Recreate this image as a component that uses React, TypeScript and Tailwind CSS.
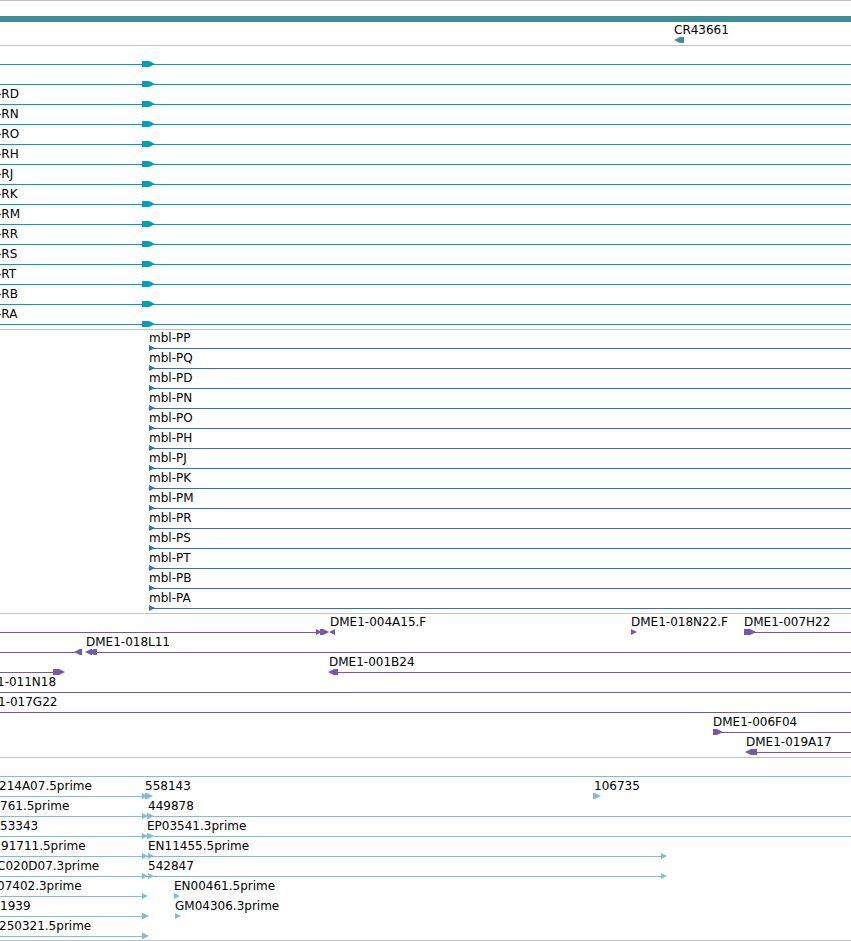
import React from 'react';

type Dir = 'left' | 'right';

interface Arrow {
  from: number;
  to: number;
  dir: Dir;
}

interface Row {
  labels?: [number, string][];
  // [start, end], no end means the feature runs past the right edge
  lines?: [number, number?][];
  arrows?: Arrow[];
}

interface TrackProps {
  name: string;
  rows: Row[];
  color: string;
  last?: boolean;
}

const right = (from: number, to: number): Arrow => ({ from, to, dir: 'right' });
const left = (from: number, to: number): Arrow => ({ from, to, dir: 'left' });

const geneRows: Row[] = [{ labels: [[674, 'CR43661']], arrows: [left(674, 684)] }];

const transcriptNames = [
  '', '', '-RD', '-RN', '-RO', '-RH', '-RJ', '-RK', '-RM', '-RR', '-RS', '-RT', '-RB', '-RA',
];

const transcriptRows: Row[] = transcriptNames.map((name) => ({
  labels: name ? [[-3, name]] : [],
  lines: [[0]],
  arrows: [right(142, 155)],
}));

const proteinNames = ['PP', 'PQ', 'PD', 'PN', 'PO', 'PH', 'PJ', 'PK', 'PM', 'PR', 'PS', 'PT', 'PB', 'PA'];

const proteinRows: Row[] = proteinNames.map((name) => ({
  labels: [[149, `mbl-${name}`]],
  lines: [[149]],
  arrows: [right(149, 155)],
}));

const bacRows: Row[] = [
  {
    labels: [[330, 'DME1-004A15.F'], [631, 'DME1-018N22.F'], [744, 'DME1-007H22']],
    lines: [[0, 318], [744]],
    arrows: [right(316, 322), right(320, 329), left(329, 335), right(631, 637), right(744, 756)],
  },
  {
    labels: [[86, 'DME1-018L11']],
    lines: [[0, 80], [90]],
    arrows: [left(74, 82), left(85, 92), left(88, 97)],
  },
  {
    labels: [[329, 'DME1-001B24']],
    lines: [[0, 60], [332]],
    arrows: [right(53, 65), left(328, 338)],
  },
  { labels: [[-3, '1-011N18']], lines: [[0]] },
  { labels: [[-2, '1-017G22']], lines: [[0]] },
  { labels: [[713, 'DME1-006F04']], lines: [[713]], arrows: [right(713, 723)] },
  { labels: [[746, 'DME1-019A17']], lines: [[750]], arrows: [left(745, 757)] },
];

const estRows: Row[] = [
  { lines: [[0]] },
  {
    labels: [[-1, '214A07.5prime'], [145, '558143'], [594, '106735']],
    lines: [[0, 146]],
    arrows: [right(142, 148), right(145, 153), right(593, 601)],
  },
  {
    labels: [[0, '761.5prime'], [148, '449878']],
    lines: [[0]],
    arrows: [right(142, 148), right(147, 154)],
  },
  {
    labels: [[0, '53343'], [147, 'EP03541.3prime']],
    lines: [[0]],
    arrows: [right(142, 148), right(147, 154)],
  },
  {
    labels: [[1, '91711.5prime'], [148, 'EN11455.5prime']],
    lines: [[0, 662]],
    arrows: [right(142, 148), right(148, 154), right(661, 667)],
  },
  {
    labels: [[-3, 'C020D07.3prime'], [148, '542847']],
    lines: [[0, 662]],
    arrows: [right(142, 148), right(148, 154), right(661, 667)],
  },
  {
    labels: [[-3, '07402.3prime'], [174, 'EN00461.5prime']],
    lines: [[0, 144]],
    arrows: [right(142, 148), right(174, 180)],
  },
  {
    labels: [[0, '1939'], [175, 'GM04306.3prime']],
    lines: [[0, 144]],
    arrows: [right(142, 149), right(175, 181)],
  },
  { labels: [[-1, '250321.5prime']], lines: [[0, 144]], arrows: [right(142, 149)] },
];

const arrowPoints = ({ from, to, dir }: Arrow) => {
  const head = Math.min(6, to - from);
  if (dir === 'right') {
    const neck = to - head;
    return `${from},15 ${neck},15 ${to - 2},17 ${to},18 ${to - 2},19 ${neck},21 ${from},21`;
  }
  const neck = from + head;
  return `${to},15 ${neck},15 ${from + 2},17 ${from},18 ${from + 2},19 ${neck},21 ${to},21`;
};

const FeatureRow: React.FC<{ row: Row }> = ({ row }) => (
  <div className="relative h-5">
    <svg className="block h-5 w-full overflow-visible" aria-hidden="true">
      {row.lines?.map(([start, end], i) => (
        <line
          key={i}
          x1={start}
          x2={end ?? '100%'}
          y1="18.5"
          y2="18.5"
          stroke="currentColor"
          shapeRendering="crispEdges"
        />
      ))}
      {row.arrows?.map((arrow, i) => (
        <polygon key={i} points={arrowPoints(arrow)} fill="currentColor" />
      ))}
    </svg>
    {row.labels?.map(([x, text]) => (
      <span key={text} className="absolute top-0 whitespace-nowrap leading-4 text-black" style={{ left: x }}>
        {text}
      </span>
    ))}
  </div>
);

const Track: React.FC<TrackProps> = ({ name, rows, color, last }) => (
  <section aria-label={name} className={`border-b border-[#c0c0c0] ${last ? 'pb-[2px]' : 'pb-[3px]'} ${color}`}>
    {rows.map((row, i) => (
      <FeatureRow key={i} row={row} />
    ))}
  </section>
);

const App: React.FC = () => {
  return (
    <main className="w-full overflow-hidden border-t border-[#c0c0c0] bg-white font-['DejaVu_Sans',sans-serif] text-xs">
      <div className="pt-[15px]">
        <div className="h-[6px] bg-[#3d8f94]" />
      </div>
      <Track name="Genes" rows={geneRows} color="text-[#3d8f94]" />
      <Track name="Transcripts" rows={transcriptRows} color="text-[#009fbf]" />
      <Track name="Proteins" rows={proteinRows} color="text-[#326ccc]" />
      <Track name="BACs" rows={bacRows} color="text-[#7459a8]" />
      <Track name="ESTs" rows={estRows} color="text-[#82bbde]" last />
    </main>
  );
};

export default App;
